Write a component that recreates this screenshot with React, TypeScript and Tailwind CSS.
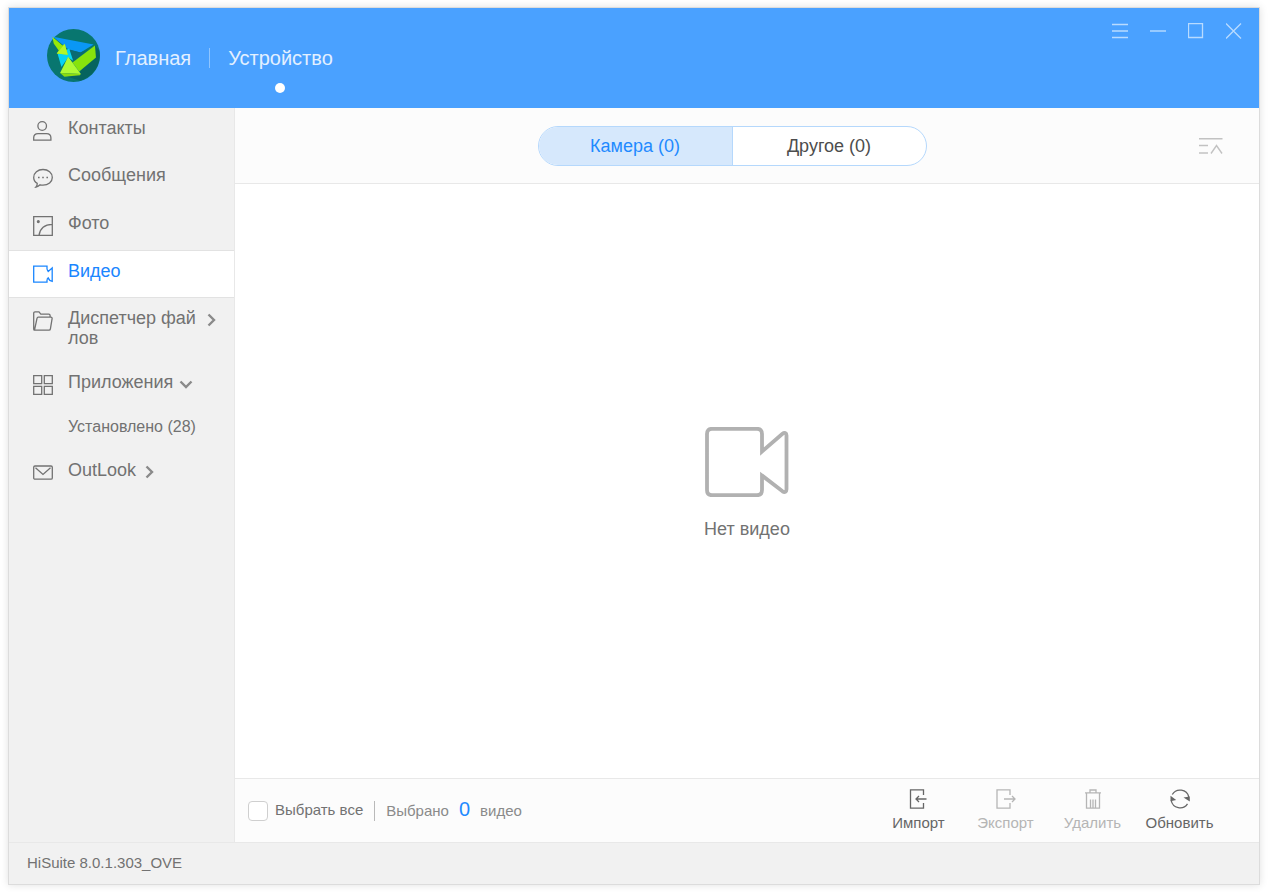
import type { ReactNode } from "react";

function Icon({ children, className = "size-5" }: { children: ReactNode; className?: string }) {
    return (
        <svg className={`${className} shrink-0`} viewBox="0 0 20 20" fill="none" stroke="currentColor" strokeWidth="1.3" aria-hidden="true">
            {children}
        </svg>
    )
}

function Logo() {
    return (
        <svg className="size-[53px] shrink-0" viewBox="140 87 158 158" aria-hidden="true">
            <circle cx="219" cy="166" r="79" fill="#08766f" />
            <path d="M284 138L296 152A79 79 0 0 1 240 241L200 229L240 214Z" fill="#06645f" />
            <path d="M158 110L279 133L240 157L205 149Z" fill="#0a97f5" />
            <path d="M207 148L240 157L262 148L218 186Z" fill="#0a6a72" />
            <path d="M172 162L206 145L218 182L203 172L183 200Z" fill="#08d2f4" />
            <path d="M156 110L186 136L193 132L202 164L169 160L175 151L160 130Z" fill="#94e808" />
            <path d="M193 132L202 164L169 160Z" fill="#b4f52a" />
            <path d="M283 136L286 172L236 214L216 187Z" fill="#87e30c" />
            <path d="M203 170L241 221L179 218Z" fill="#aefb34" />
            <path d="M179 218L241 221L238 225L192 229Z" fill="#8cdc10" />
        </svg>
    )
}

function VideoIcon() {
    return (
        <Icon>
            <path d="M14 5.3V2.1H.7v16H14v-2.7M14 5.3l1.2 2.200 4-3.600v13.400l-2.400-.9-1.600-2.600L14 15.400" />
        </Icon>
    )
}

function Chevron({ down = false }: { down?: boolean }) {
    return (
        <svg className="mt-[5px] size-[14px] shrink-0" viewBox="0 0 14 14" fill="none" stroke="#8a8a8a" strokeWidth="2.4" aria-hidden="true">
            <path d={down ? "M1.500 4.500l5.500 5.500 5.500-5.500" : "M4.500 1.500L10 7l-5.500 5.500"} />
        </svg>
    )
}

function MenuItem({ icon, label, children, className = "h-[47px]" }: { icon: ReactNode; label: string; children?: ReactNode; className?: string }) {
    return (
        <a href="#" className={`${className} flex items-start pl-6 pt-[10px] text-lg leading-5`}>
            <span className="mr-[15px] mt-[3px]">{icon}</span>
            <span className="mr-[6px] max-w-[130px] break-all">{label}</span>
            {children}
        </a>
    )
}

function Action({ icon, label, disabled = false }: { icon: ReactNode; label: string; disabled?: boolean }) {
    return (
        <button disabled={disabled} className="flex w-[87px] flex-col items-center gap-1 text-[#666] disabled:text-[#b5b5b5]">
            {icon}
            <span className="text-[15px] leading-5">{label}</span>
        </button>
    )
}

export default function App() {
    return (
        <div className="flex min-h-screen bg-white px-2 py-[7px] font-['Liberation_Sans',Arial,sans-serif] text-[#727272]">
            <div className="flex grow flex-col border border-[#dcdcdc] shadow-[0_0_8px_rgba(0,0,0,0.12)]">

                <header className="flex h-[100px] items-start justify-between bg-[#4aa1ff] pl-[38px] pr-[17px] text-[#e3f0ff]">
                    <div className="flex items-start pt-[21px]">
                        <Logo />
                        <nav className="ml-[15px] flex items-start pt-[15px] text-xl leading-7">
                            <a href="#">Главная</a>
                            <span className="mx-[18px] mt-1 h-5 w-px bg-[#8fc5ff]" />
                            <a href="#" className="flex flex-col items-center gap-[11px]">
                                Устройство
                                <span className="size-[10px] rounded-full bg-white" />
                            </a>
                        </nav>
                    </div>
                    <div className="flex gap-[22px] pt-[15px] text-[#b9dbff]">
                        <button aria-label="Меню">
                            <svg className="size-4" viewBox="0 0 16 16" stroke="currentColor" aria-hidden="true"><path d="M0 1.500h16M0 8h16M0 14.500h16" strokeWidth="1.300" /></svg>
                        </button>
                        <button aria-label="Свернуть">
                            <svg className="size-4" viewBox="0 0 16 16" stroke="currentColor" aria-hidden="true"><path d="M0 8h16" strokeWidth="1.400" /></svg>
                        </button>
                        <button aria-label="Развернуть">
                            <svg className="size-4" viewBox="0 0 16 16" fill="none" stroke="currentColor" aria-hidden="true"><path d="M.5.5h14v14H.5z" strokeWidth="1.300" /></svg>
                        </button>
                        <button aria-label="Закрыть">
                            <svg className="size-4" viewBox="0 0 16 16" stroke="currentColor" aria-hidden="true"><path d="M0 .5l15 15M15 .5l-15 15" strokeWidth="1.300" /></svg>
                        </button>
                    </div>
                </header>

                <div className="flex grow">
                    <aside className="w-[226px] shrink-0 border-r border-[#e8e8e8] bg-[#f1f1f1]">
                        <MenuItem label="Контакты" icon={<Icon><circle cx="9.200" cy="5" r="4.300" /><path d="M.7 19.200v-2.400c0-2.600 1.800-4.200 4.400-4.200h8.400c2.600 0 4.400 1.600 4.400 4.200v2.400z" /></Icon>} />
                        <MenuItem label="Сообщения" className="h-12" icon={
                            <Icon>
                                <path d="M4.200 15.400C2 14 .7 11.800.7 9.400.7 5 4.800 1.500 10 1.500S19.300 5 19.300 9.400 15.200 17.200 10 17.200c-1 0-2-.1-2.900-.4-1 1-2.300 1.800-4.100 2.200.9-1 1.300-2.200 1.200-3.600z" />
                                <path d="M5 9.500h1.600M9.200 9.500h1.600M13.400 9.500H15" />
                            </Icon>
                        } />
                        <MenuItem label="Фото" icon={<Icon><path d="M.7.7h18.600v18.600H.7zM6 19.300C7 12.500 11.500 8.500 19.300 8.300" /><circle cx="5.300" cy="5.600" r=".9" fill="currentColor" /></Icon>} />
                        <div className="border-y border-[#e2e2e2] bg-white text-[#1a86ff]">
                            <MenuItem label="Видео" icon={<VideoIcon />} className="h-[46px]" />
                        </div>
                        <MenuItem label="Диспетчер файлов" className="h-16" icon={<Icon><path d="M1.500 19.200C.9 19 .7 18.600.7 18V2.200C.7 1.300 1.200.9 2 .9h4l1.800 2.200h8c.9 0 1.300.5 1.300 1.300v1.800M5.200 6.200h12.600c1 0 1.500.5 1.300 1.500l-1.700 10.200c-.1.900-.6 1.300-1.400 1.300H1.500L4 7.300c.2-.8.500-1.100 1.200-1.100z" /></Icon>}>
                            <Chevron />
                        </MenuItem>
                        <MenuItem label="Приложения" icon={<Icon><path d="M.7.7h8v8h-8zM11.300.7h8v8h-8zM.7 11.300h8v8h-8zM11.300 11.300h8v8h-8z" /></Icon>}>
                            <Chevron down />
                        </MenuItem>
                        <a href="#" className="block h-[41px] pl-[59px] pt-2 text-base leading-5">Установлено (28)</a>
                        <MenuItem label="OutLook" icon={<Icon><rect x=".7" y="3" width="18.600" height="13.200" rx="1.300" /><path d="M2.500 4.800L10 11.500l7.500-6.700" /></Icon>}>
                            <Chevron />
                        </MenuItem>
                    </aside>

                    <main className="flex grow flex-col">
                        <div className="grid h-[76px] grid-cols-[1fr_auto_1fr] items-center border-b border-[#e8e8e8] bg-[#fcfcfc] pr-[30px]">
                            <div className="col-start-2 flex h-10 overflow-hidden rounded-full border border-[#b5d8fc] bg-white text-lg">
                                <button className="w-[194px] border-r border-[#b5d8fc] bg-[#d6e8fc] text-[#1f8aff]">Камера (0)</button>
                                <button className="w-[193px] text-[#4d4d4d]">Другое (0)</button>
                            </div>
                            <button aria-label="Сортировка" className="justify-self-end pr-[6px]">
                                <svg className="h-4 w-6" viewBox="0 0 24 16" fill="none" stroke="#c2c2c2" strokeWidth="1.400" aria-hidden="true">
                                    <path d="M0 .8h23.500M0 7.500h9M0 15h9M12 15.500L17.500 7.500l5.500 8" />
                                </svg>
                            </button>
                        </div>

                        <div className="flex grow flex-col items-center justify-center gap-[22px] pt-1">
                            <svg className="h-[70px] w-[84px]" viewBox="0 0 84 70" fill="none" stroke="#b1b1b1" strokeWidth="3.800" aria-hidden="true">
                                <path d="M57 24.500V7c0-3.500-1.700-5.200-5-5.200H7C3.700 1.800 2 3.500 2 7v56c0 3.500 1.700 5.200 5 5.200h45c3.300 0 5-1.700 5-5.200V48.500l20.500 15.800c2.300 1.500 4 .5 4-2V8.500c0-2.500-2-3.300-4-1.700z" />
                            </svg>
                            <p className="text-lg leading-5">Нет видео</p>
                        </div>

                        <div className="flex h-16 items-center justify-between border-t border-[#e8e8e8] bg-[#fcfcfc] pl-[13px] pr-9">
                            <div className="flex items-center text-[15px]">
                                <label className="flex items-center gap-[7px]">
                                    <input type="checkbox" className="size-5 appearance-none rounded border border-[#cfcfcf] bg-white checked:bg-[#1f8aff]" />
                                    Выбрать все
                                </label>
                                <span className="mx-[11px] h-5 w-px bg-[#b9b9b9]" />
                                <p className="flex items-baseline gap-[10px] text-[#8a8a8a]">
                                    Выбрано <span className="text-xl leading-5 text-[#1f8aff]">0</span> видео
                                </p>
                            </div>
                            <div className="flex">
                                <Action label="Импорт" icon={<Icon><path d="M14.500 6V.8H1.500v18.400h13V14M17.500 10H7M10 7l-3 3 3 3" /></Icon>} />
                                <Action label="Экспорт" disabled icon={<Icon><path d="M14 6V.8H1v18.400h13V14M8 10h11M16 7l3 3-3 3" /></Icon>} />
                                <Action label="Удалить" disabled icon={<Icon><path d="M2 3.800h16M7 3.800V1h6v2.800M3.500 3.800v15.400h13V3.800M7.500 10.500v8.500M10 10.500v8.500M12.500 10.500v8.500" /></Icon>} />
                                <Action label="Обновить" icon={
                                    <Icon>
                                        <path d="M2.300 5.500A9 9 0 0 1 18.800 8M1.200 11.500A9 9 0 0 0 17.500 14.800" />
                                        <path d="M.5 6.800v5.400L6.200 11zM19.800 12.400V7.600l-6.300.8z" fill="currentColor" stroke="none" />
                                    </Icon>
                                } />
                            </div>
                        </div>
                    </main>
                </div>

                <footer className="flex h-[42px] items-center border-t border-[#e8e8e8] bg-[#f1f1f1] pl-[18px] text-[15px]">
                    HiSuite 8.0.1.303_OVE
                </footer>
            </div>
        </div>
    )
}
